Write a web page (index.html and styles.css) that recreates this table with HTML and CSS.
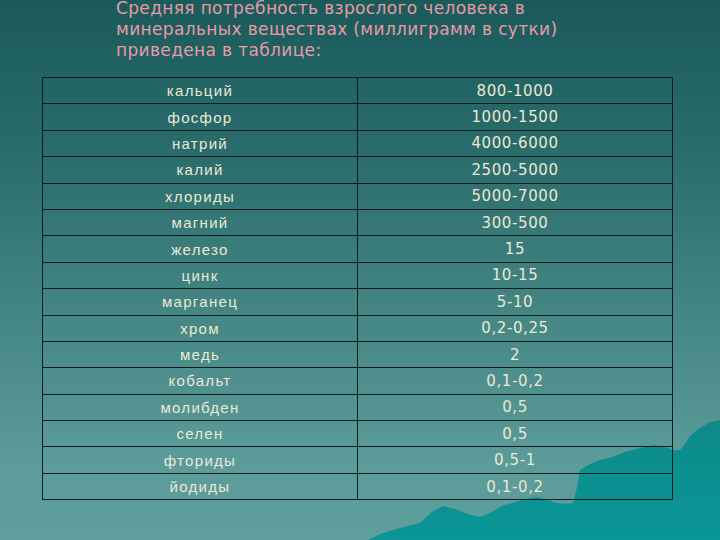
FILE: index.html
```html
<!DOCTYPE html>
<html lang="ru">
<head>
<meta charset="utf-8">
<link rel="stylesheet" href="styles.css">
</head>
<body>
<div class="slide">
  <svg class="mountain" viewBox="0 0 720 540" preserveAspectRatio="none" aria-hidden="true">
    <defs>
      <linearGradient id="mg" x1="0" y1="0" x2="0" y2="1">
        <stop offset="0" stop-color="#0e8a8a"/>
        <stop offset="1" stop-color="#0a9696"/>
      </linearGradient>
    </defs>
    <path fill="url(#mg)" d="M368 540 L380 534 L400 528 L420 523 L432 512 L443 506 L455 509 L468 514 L480 517 L492 512 L502 506 L512 503 L525 499 L537 497 L548 500 L557 503 L566 504 L573 503 L577 488 L580 470 L590 464 L600 460 L612 457 L625 452 L640 448 L653 445 L665 447 L673 450 L680 450 L685 444 L690 436 L700 428 L710 422 L720 420 L720 540 Z"/>
  </svg>
  <h1 class="title">Средняя потребность взрослого человека в минеральных веществах (миллиграмм в сутки) приведена в таблице:</h1>
  <table class="grid">
    <tbody>
      <tr><td class="name">кальций</td><td class="val">800-1000</td></tr>
      <tr><td class="name">фосфор</td><td class="val">1000-1500</td></tr>
      <tr><td class="name">натрий</td><td class="val">4000-6000</td></tr>
      <tr><td class="name">калий</td><td class="val">2500-5000</td></tr>
      <tr><td class="name">хлориды</td><td class="val">5000-7000</td></tr>
      <tr><td class="name">магний</td><td class="val">300-500</td></tr>
      <tr><td class="name">железо</td><td class="val">15</td></tr>
      <tr><td class="name">цинк</td><td class="val">10-15</td></tr>
      <tr><td class="name">марганец</td><td class="val">5-10</td></tr>
      <tr><td class="name">хром</td><td class="val">0,2-0,25</td></tr>
      <tr><td class="name">медь</td><td class="val">2</td></tr>
      <tr><td class="name">кобальт</td><td class="val">0,1-0,2</td></tr>
      <tr><td class="name">молибден</td><td class="val">0,5</td></tr>
      <tr><td class="name">селен</td><td class="val">0,5</td></tr>
      <tr><td class="name">фториды</td><td class="val">0,5-1</td></tr>
      <tr><td class="name">йодиды</td><td class="val">0,1-0,2</td></tr>
    </tbody>
  </table>
</div>
</body>
</html>
```

FILE: styles.css
```css
html, body {
  margin: 0;
  padding: 0;
}
body {
  width: 720px;
  height: 540px;
  overflow: hidden;
}
.slide {
  position: relative;
  width: 720px;
  height: 540px;
  overflow: hidden;
  background: linear-gradient(180deg, #1a5a5a 0%, #2b6e6d 30%, #468886 60%, #5b9b99 85%, #5e9e9c 100%);
}
.mountain {
  position: absolute;
  left: 0;
  top: 0;
  width: 720px;
  height: 540px;
}
.title {
  position: relative;
  margin: -2px 0 0 0;
  padding: 0 0 0 116px;
  width: 480px;
  font-family: "DejaVu Sans", sans-serif;
  font-weight: normal;
  font-size: 17px;
  letter-spacing: 0.35px;
  line-height: 21px;
  color: #e79aa6;
}
.grid {
  position: relative;
  margin: 16px 0 0 42px;
  width: 631px;
  border-collapse: collapse;
  table-layout: fixed;
}
.grid td {
  height: 25.4px;
  padding: 0;
  border: 1px solid #0b1c1c;
  text-align: center;
  vertical-align: middle;
  color: #ece8d2;
}
.name {
  width: 314px;
  font-family: "Liberation Sans", sans-serif;
  font-size: 15px;
  letter-spacing: 1.3px;
}
.val {
  font-family: "DejaVu Sans", sans-serif;
  font-size: 15px;
  letter-spacing: 0.6px;
}
```
